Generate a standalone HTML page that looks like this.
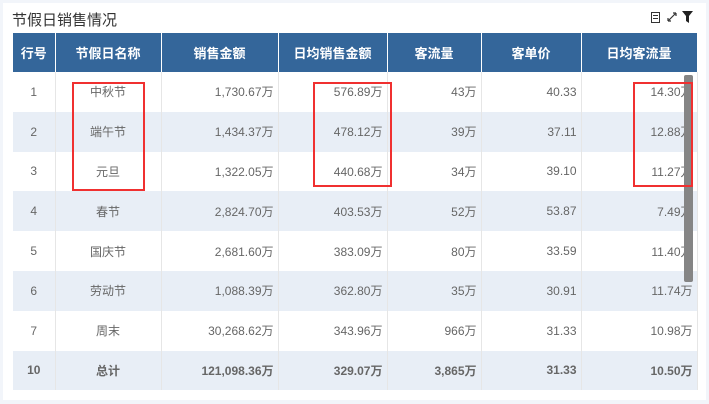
<!DOCTYPE html>
<html><head><meta charset="utf-8"><style>
*{margin:0;padding:0;box-sizing:border-box}
body{width:709px;height:404px;background:#f2f5fa;font-family:"Liberation Sans","Noto Sans CJK SC",sans-serif;position:relative;overflow:hidden}
.panel{position:absolute;left:3px;top:3px;width:703px;height:397px;background:#fff}
.title{position:absolute;left:12px;top:9px;font-size:15px;color:#333}
table{position:absolute;left:13px;top:33px;border-collapse:collapse;table-layout:fixed;width:684px}
th{background:#34669a;color:#fff;font-weight:bold;font-size:13px;height:39px;border-right:1px solid #fff;text-align:center}
td{height:39.8px;font-size:12px;color:#666;border-right:1px solid #e6e6e6;padding:0 4px}
tr:nth-child(odd) td{background:#e8eef6}
td.c{text-align:center}td.r{text-align:right}
tr.tot td{font-weight:bold}
.box{position:absolute;border:2px solid #f03030}
.sb{position:absolute;left:684px;top:75px;width:9px;height:207px;background:#858585;border-radius:2px}
</style></head><body>
<div class="panel"></div>
<div class="title">节假日销售情况</div>
<div style="position:absolute;left:651px;top:12px;width:9px;height:11px;border:1.5px solid #333"></div>
<div style="position:absolute;left:653px;top:15px;width:5px;height:1px;background:#333;box-shadow:0 3px 0 #333"></div>
<svg style="position:absolute;left:667px;top:12px" width="10" height="10"><path d="M1 9L9 1M1 9v-3M1 9h3M9 1h-3M9 1v3" stroke="#333" stroke-width="1.2" fill="none"/></svg>
<svg style="position:absolute;left:682px;top:11px" width="11" height="12"><path d="M0 0h11L7 5v7L4 10V5z" fill="#222"/></svg>
<table>
<colgroup><col style="width:42px"><col style="width:106px"><col style="width:117px"><col style="width:109px"><col style="width:94px"><col style="width:100px"><col style="width:116px"></colgroup>
<tr><th>行号</th><th>节假日名称</th><th>销售金额</th><th>日均销售金额</th><th>客流量</th><th>客单价</th><th>日均客流量</th></tr>
<tr><td class="c">1</td><td class="c">中秋节</td><td class="r">1,730.67万</td><td class="r">576.89万</td><td class="r">43万</td><td class="r">40.33</td><td class="r">14.30万</td></tr>
<tr><td class="c">2</td><td class="c">端午节</td><td class="r">1,434.37万</td><td class="r">478.12万</td><td class="r">39万</td><td class="r">37.11</td><td class="r">12.88万</td></tr>
<tr><td class="c">3</td><td class="c">元旦</td><td class="r">1,322.05万</td><td class="r">440.68万</td><td class="r">34万</td><td class="r">39.10</td><td class="r">11.27万</td></tr>
<tr><td class="c">4</td><td class="c">春节</td><td class="r">2,824.70万</td><td class="r">403.53万</td><td class="r">52万</td><td class="r">53.87</td><td class="r">7.49万</td></tr>
<tr><td class="c">5</td><td class="c">国庆节</td><td class="r">2,681.60万</td><td class="r">383.09万</td><td class="r">80万</td><td class="r">33.59</td><td class="r">11.40万</td></tr>
<tr><td class="c">6</td><td class="c">劳动节</td><td class="r">1,088.39万</td><td class="r">362.80万</td><td class="r">35万</td><td class="r">30.91</td><td class="r">11.74万</td></tr>
<tr><td class="c">7</td><td class="c">周末</td><td class="r">30,268.62万</td><td class="r">343.96万</td><td class="r">966万</td><td class="r">31.33</td><td class="r">10.98万</td></tr>
<tr class="tot"><td class="c">10</td><td class="c">总计</td><td class="r">121,098.36万</td><td class="r">329.07万</td><td class="r">3,865万</td><td class="r">31.33</td><td class="r">10.50万</td></tr>
</table>
<div class="sb"></div>
<div class="box" style="left:72px;top:82px;width:73px;height:109px"></div>
<div class="box" style="left:313px;top:82px;width:79px;height:105px"></div>
<div class="box" style="left:633px;top:82px;width:60px;height:105px"></div>
</body></html>
